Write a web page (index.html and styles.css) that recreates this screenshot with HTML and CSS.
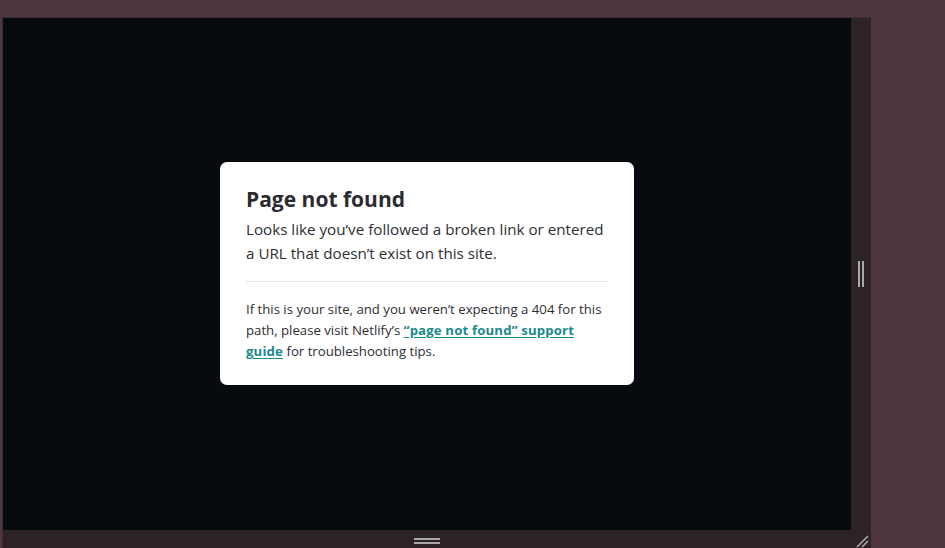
FILE: index.html
```html
<!DOCTYPE html>
<html lang="en">
<head>
<meta charset="utf-8">
<title>Page not found</title>
<link rel="stylesheet" href="styles.css">
</head>
<body>
<div class="shell">
  <div class="frame-row">
    <div class="viewport">
      <div class="card">
        <h1 class="title">Page not found</h1>
        <p class="lead">Looks like you’ve followed a broken link or entered a URL that doesn’t exist on this site.</p>
        <hr class="divider">
        <p class="note">If this is your site, and you weren’t expecting a 404 for this path, please visit Netlify’s <a class="link" href="#">“page not found” support guide</a> for troubleshooting tips.</p>
      </div>
    </div>
    <div class="side-handle"><span class="vbar"></span><span class="vbar"></span></div>
  </div>
  <div class="bottom-handle">
    <div class="hbars"><span class="hbar"></span><span class="hbar"></span></div>
    <svg class="corner" width="14" height="14" viewBox="0 0 14 14"><path d="M2 13 L13 2 M7 13 L13 7" stroke="#a8a8a8" stroke-width="1.6" fill="none"/></svg>
  </div>
</div>
</body>
</html>
```
FILE: styles.css
```css
* { box-sizing: border-box; }
html, body { margin: 0; padding: 0; }
body {
  background: #4e3540;
  width: 945px;
  height: 548px;
  overflow: hidden;
  font-family: "Open Sans", "Noto Sans", sans-serif;
}
.shell {
  margin: 17px 0 0 2px;
  width: 869px;
  border-top: 1px solid #3f2a33;
  border-left: 1px solid #3f2a33;
  display: flex;
  flex-direction: column;
}
.frame-row {
  display: flex;
  height: 512px;
}
.viewport {
  width: 848px;
  background: #070b10;
  display: flex;
  align-items: center;
  justify-content: center;
}
.side-handle {
  width: 20px;
  background: #2d2226;
  display: flex;
  align-items: center;
  justify-content: center;
  gap: 2px;
}
.vbar {
  width: 2px;
  height: 26px;
  background: #a8a8a8;
}
.bottom-handle {
  height: 18px;
  background: #2d2226;
  display: flex;
  align-items: flex-start;
  justify-content: center;
  padding-top: 8px;
  position: relative;
}
.hbars {
  display: flex;
  flex-direction: column;
  gap: 2px;
  margin-left: -20px;
}
.hbar {
  width: 26px;
  height: 2px;
  background: #a8a8a8;
}
.corner {
  position: absolute;
  right: 2px;
  bottom: 0px;
}
.card {
  width: 414px;
  background: #ffffff;
  border-radius: 7px;
  padding: 24px 25px 23px 26px;
  margin-top: -1px;
  color: #2e2e33;
}
.title {
  margin: 0 0 5px;
  font-size: 21px;
  line-height: 26px;
  font-weight: 700;
  color: #2b2b2f;
}
.lead {
  margin: 0;
  font-size: 15.2px;
  line-height: 24px;
}
.divider {
  border: 0;
  border-top: 1px solid #e6e6e6;
  margin: 16px 0 17px;
}
.note {
  margin: 0;
  padding-right: 6px;
  font-size: 13.2px;
  line-height: 21px;
}
.link {
  color: #1b8a8d;
  font-weight: 700;
  letter-spacing: 0.15px;
  text-decoration: underline;
  text-underline-offset: 2px;
}
```
